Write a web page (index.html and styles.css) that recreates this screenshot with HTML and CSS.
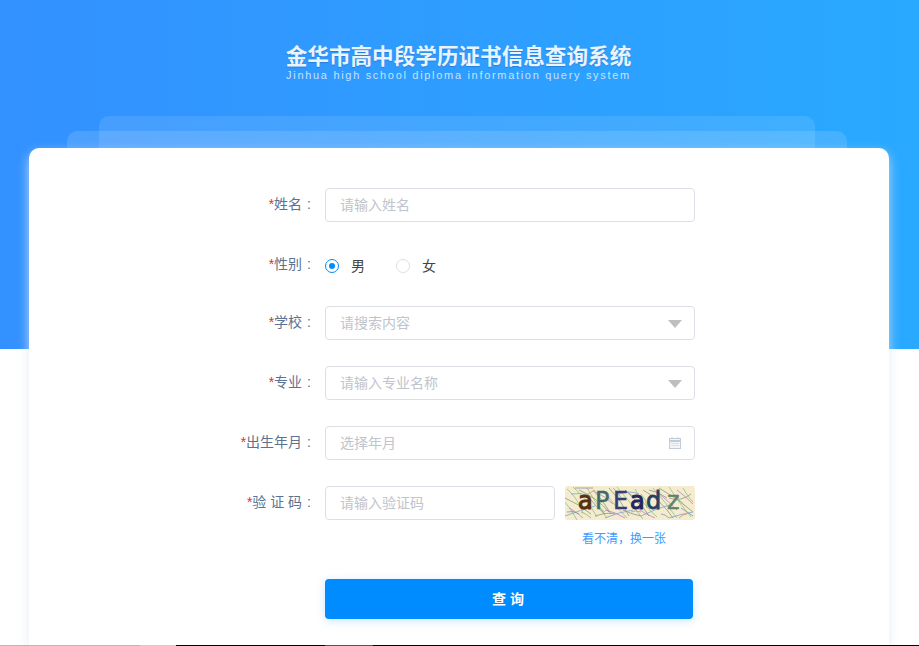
FILE: index.html
```html
<!DOCTYPE html>
<html lang="zh-CN">
<head>
    <meta charset="UTF-8">
    <title>金华市高中段学历证书信息查询系统</title>
    <link rel="stylesheet" href="styles.css">
</head>

<body>
<div class="banner">
    <h1 class="banner-title">金华市高中段学历证书信息查询系统</h1>
    <p class="banner-sub">Jinhua high school diploma information query system</p>
</div>
<div class="card-wrap">
    <div class="card-back card-back1"></div>
    <div class="card-back card-back2"></div>
    <div class="card">
        <form class="form">
            <div class="form-row">
                <label class="form-label"><i>*</i>姓名<span class="colon">:</span></label>
                <div class="input"><span class="placeholder">请输入姓名</span></div>
            </div>
            <div class="form-row form-row-radio">
                <label class="form-label"><i>*</i>性别<span class="colon">:</span></label>
                <div class="radios">
                    <span class="radio radio-on"></span><span class="radio-text radio-text1">男</span>
                    <span class="radio"></span><span class="radio-text">女</span>
                </div>
            </div>
            <div class="form-row">
                <label class="form-label"><i>*</i>学校<span class="colon">:</span></label>
                <div class="input"><span class="placeholder">请搜索内容</span><b class="arrow"></b></div>
            </div>
            <div class="form-row">
                <label class="form-label"><i>*</i>专业<span class="colon">:</span></label>
                <div class="input"><span class="placeholder">请输入专业名称</span><b class="arrow"></b></div>
            </div>
            <div class="form-row">
                <label class="form-label"><i>*</i>出生年月<span class="colon">:</span></label>
                <div class="input">
                    <span class="placeholder">选择年月</span>
                    <svg class="calendar" width="14" height="14" viewBox="0 0 14 14" fill="none" stroke="#c3cbd6">
                        <rect x="1.5" y="2.5" width="11" height="10" fill="#f3f5f8"/>
                        <path d="M1.5 4.5h11M1.5 5.5h11M4 1v2M10 1v2"/>
                        <path d="M3.5 7.5h7M3.5 9.5h7" stroke-dasharray="1 1"/>
                    </svg>
                </div>
            </div>
            <div class="form-row form-row-code">
                <label class="form-label"><i>*</i>验 证 码<span class="colon">:</span></label>
                <div class="input input-code"><span class="placeholder">请输入验证码</span></div>
                <div class="code-box">
                    <svg class="code-img" width="130" height="34" viewBox="0 0 130 34">
                        <rect width="130" height="34" fill="#f5ebcf"/>
                        <g fill="none" stroke-width=".8">
                            <path d="M2 3q10 8 16 24M8 1q14 12 24 30M22 2q8 14 20 30M38 4q10 14 24 28M52 1q14 16 26 32M70 3q8 16 22 28M88 2q12 14 24 30M104 1q10 16 22 30M-2 14q8 8 14 20M118 2q4 8 10 14" stroke="#8fc28a"/>
                            <path d="M0 12q14 6 26 16M14 4q18 8 30 22M46 28q-8-14-18-24M64 30q-8-16-20-28M84 30q-10-16-24-26M108 32q-12-18-30-28M128 26q-16-14-34-24M126 8q-10 8-22 4M30 30q12-4 20-2" stroke="#8a9c78"/>
                            <path d="M4 22q8 4 14 10M30 6q10 4 18 12M60 4q8 8 16 16M92 6q10 8 20 18M112 4q8 6 16 14M40 24q10 2 20 8M72 22q8 6 18 10" stroke="#b587c4"/>
                            <path d="M0 30q16-6 30-10M40 32q14-6 28-8M76 30q16-8 32-12M104 32q12-4 24-6M6 8q10-2 18 2M54 8q10-4 20 0" stroke="#7ba3d2"/>
                            <path d="M10 2h18M26 14q6 8 14 14M58 24q8 4 18 6M116 22q6 4 12 8M84 4q10 2 18 8M2 26q6-2 12 2M96 28q4 0 8 4" stroke="#8c90a0"/>
                            <path d="M16 26q6 2 10 6M48 2q6 4 8 10M76 8q6 6 6 14M110 12q6 2 10 8M34 20q2 4 6 6" stroke="#78c070"/>
                            <path d="M20 10q6-4 10-6M66 26q4-2 10 0M122 28q-4 0-8 4" stroke="#c89a70"/>
                        </g>
                        <text class="code-text" y="23"><tspan x="13" fill="#5a3010" stroke="#5a3010" stroke-width="1.1">a</tspan><tspan x="30" fill="#3f6a66" stroke="#3f6a66" stroke-width=".4">P</tspan><tspan x="48" fill="#3a3a78" stroke="#3a3a78" stroke-width=".5">E</tspan><tspan x="65" fill="#24245e" stroke="#24245e" stroke-width="1">a</tspan><tspan x="81" fill="#27405e" stroke="#27405e" stroke-width=".8">d</tspan><tspan x="102" fill="#62806a" stroke="#62806a" stroke-width=".4">z</tspan></text>
                    </svg>
                    <a class="code-link">看不清，换一张</a>
                </div>
            </div>
            <div class="form-row form-row-btn">
                <button type="button" class="btn">查 询</button>
            </div>
        </form>
    </div>
</div>
<div class="edge-line"></div>
</body>
</html>
```

FILE: styles.css
```css
html,body{
    margin: 0;
    padding: 0;
    height: 646px;
    overflow: hidden;
    background-color: #fff;
    font-family: "Liberation Sans", "Noto Sans CJK SC", sans-serif;
}
.banner{
    height: 349px;
    background: linear-gradient(90deg, #3391ff, #29a9ff);
    display: flex;
    flex-direction: column;
    align-items: center;
    padding: 42px 2px 0 0;
    box-sizing: border-box;
}
.banner-title{
    margin: 0;
    font-size: 21.6px;
    line-height: 30px;
    font-weight: 700;
    color: #e8f4ff;
    white-space: nowrap;
    text-shadow: 0 1px 1px rgba(30,90,170,.45);
}
.banner-sub{
    margin: -4px 0 0;
    font-size: 11px;
    line-height: 14px;
    letter-spacing: 1.69px;
    color: #c4e3ff;
    white-space: nowrap;
}
.card-wrap{
    position: relative;
    margin: -201px 30px 0 29px;
}
.card-back{
    position: absolute;
    border-radius: 10px 10px 0 0;
}
.card-back1{
    left: 70px;
    right: 74px;
    top: -32px;
    height: 40px;
    background-color: rgba(255,255,255,.1);
}
.card-back2{
    left: 38px;
    right: 42px;
    top: -17px;
    height: 40px;
    background-color: rgba(255,255,255,.13);
}
.card{
    position: relative;
    height: 497px;
    background-color: #fff;
    border-radius: 10px 10px 0 0;
    box-shadow: 0 5px 12px rgba(222,230,242,.8);
}
.form{
    padding-top: 40px;
}
.form-row{
    display: flex;
    align-items: flex-start;
    margin-bottom: 26px;
}
.form-row-radio{
    height: 34px;
    margin-bottom: 24px;
}
.form-label{
    box-sizing: border-box;
    width: 296px;
    padding-right: 14px;
    line-height: 32px;
    font-size: 14px;
    color: #5d7290;
    text-align: right;
    white-space: nowrap;
}
.form-label i{
    font-style: normal;
    color: #f5222d;
}
.colon{
    margin-left: 5px;
}
.input{
    position: relative;
    box-sizing: border-box;
    width: 370px;
    height: 34px;
    border: 1px solid #dcdfe6;
    border-radius: 4px;
    background-color: #fff;
    padding: 0 14px;
    line-height: 33px;
    font-size: 14px;
}
.input-code{
    width: 230px;
}
.placeholder{
    color: #c0c4cc;
}
.arrow{
    position: absolute;
    right: 12px;
    top: 13px;
    width: 0;
    height: 0;
    border-left: 7px solid transparent;
    border-right: 7px solid transparent;
    border-top: 8px solid #bfbfbf;
}
.calendar{
    position: absolute;
    right: 12px;
    top: 9px;
}
.radios{
    display: flex;
    align-items: center;
    height: 36px;
    font-size: 14px;
    color: #444;
}
.radio{
    box-sizing: border-box;
    width: 14px;
    height: 14px;
    border: 1px solid #dcdfe6;
    border-radius: 50%;
    background-color: #fff;
}
.radio-on{
    border-color: #008cff;
    display: flex;
    align-items: center;
    justify-content: center;
}
.radio-on::after{
    content: "";
    width: 6px;
    height: 6px;
    border-radius: 50%;
    background-color: #008cff;
}
.radio-text{
    margin-left: 12px;
    margin-bottom: 2px;
}
.radio-text1{
    margin-right: 31px;
}
.form-row-code{
    margin-bottom: 0;
}
.code-box{
    margin-left: 10px;
    width: 130px;
    text-align: center;
}
.code-img{
    display: block;
    border-radius: 3px;
}
.code-text{
    font-family: "DejaVu Sans", sans-serif;
    font-size: 24px;
}
.code-link{
    display: block;
    margin-top: 9px;
    padding-right: 12px;
    font-size: 12px;
    line-height: 21px;
    color: #3d9bff;
}
.form-row-btn{
    padding-left: 296px;
    margin-top: 29px;
    margin-bottom: 0;
}
.btn{
    width: 368px;
    height: 40px;
    padding: 0 2px 2px 0;
    border: none;
    border-radius: 4px;
    background-color: #008cff;
    color: #fff;
    font-family: inherit;
    font-size: 14px;
    font-weight: 700;
    box-shadow: 0 2px 10px rgba(0,140,255,.2);
}
.edge-line{
    position: absolute;
    left: 0;
    right: 0;
    top: 645px;
    height: 1px;
    background: linear-gradient(90deg, #b8b8b8 140px, #cfcfcf 140px, #cfcfcf 176px, #000 176px, #000 325px, #555 325px, #555 373px, #000 373px);
}
```
